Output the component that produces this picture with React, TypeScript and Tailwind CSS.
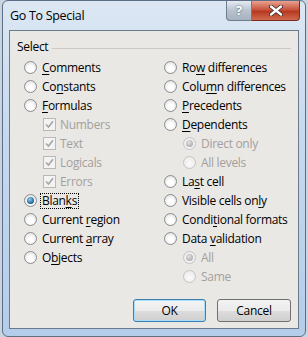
type Opt = { label: string; key?: number; sel?: boolean; off?: boolean; focus?: boolean };

function Radio({ sel, off }: { sel?: boolean; off?: boolean }) {
  return (
    <span
      className={`relative flex size-[13px] shrink-0 items-center justify-center rounded-full border ${
        off ? "border-[#c4c4c4] bg-[radial-gradient(circle_at_50%_60%,#fbfbfb,#e6e6e6)]" : "border-[#8b8d8f] bg-[radial-gradient(circle_at_50%_60%,#ffffff_30%,#d5d5d5)]"
      }`}
    >
      {sel && (
        <span
          className={`size-[7px] rounded-full ${
            off ? "bg-[radial-gradient(circle_at_40%_35%,#e2e2e2,#9c9c9c)]" : "bg-[radial-gradient(circle_at_40%_35%,#8fd0f3,#1b5e93_70%)]"
          }`}
        />
      )}
    </span>
  );
}

function Check() {
  return (
    <span className="flex size-[13px] shrink-0 items-center justify-center border border-[#b8b8b8] bg-[#f3f3f3]">
      <svg width="9" height="9" viewBox="0 0 9 9">
        <path d="M1 4.5 L3.5 7 L8 1.2" fill="none" stroke="#a6a6a6" strokeWidth="1.6" />
      </svg>
    </span>
  );
}

function Label({ o }: { o: Opt }) {
  const text =
    o.key === undefined ? (
      o.label
    ) : (
      <>
        {o.label.slice(0, o.key)}
        <span className="underline underline-offset-2">{o.label[o.key]}</span>
        {o.label.slice(o.key + 1)}
      </>
    );
  return (
    <span
      className={`whitespace-nowrap px-[1px] leading-[14px] ${o.off ? "text-[#a3a09c]" : "text-black"} ${
        o.focus ? "outline outline-1 outline-dotted outline-black" : ""
      }`}
    >
      {text}
    </span>
  );
}

function RadioRow({ o, indent }: { o: Opt; indent?: boolean }) {
  return (
    <div className={`flex h-[19px] items-center gap-[4px] ${indent ? "pl-[19px]" : ""}`}>
      <Radio sel={o.sel} off={o.off} />
      <Label o={o} />
    </div>
  );
}

function CheckRow({ label }: { label: string }) {
  return (
    <div className="flex h-[19px] items-center gap-[3px] pl-[19px]">
      <Check />
      <Label o={{ label, off: true }} />
    </div>
  );
}

export default function App() {
  return (
    <div
      className="relative h-[337px] w-[308px] overflow-hidden bg-[#c9d4e0] text-[12px]"
      style={{ fontFamily: '"Open Sans", "Noto Sans", sans-serif' }}
    >
      {/* window frame */}
      <div className="absolute inset-x-[2px] top-0 bottom-0 rounded-t-[6px] rounded-b-[6px] border border-[#5d6f86] bg-[linear-gradient(180deg,#dce7f3_0%,#c6d9ee_40%,#b3cdea_100%)]">
        <div className="flex h-[29px] items-start justify-between pl-[7px] pr-[5px]">
          <span className="pt-[6px] text-[12.5px] tracking-[-0.3px] text-black">Go To Special</span>
          <div className="flex">
            <div className="flex h-[20px] w-[26px] items-center justify-center rounded-bl-[4px] border border-t-0 border-[#6e7d8e] bg-[linear-gradient(180deg,#e6ebf1,#b9c3cf_50%,#a7b3c1)] text-[13px] font-bold text-white [text-shadow:0_0_2px_#3d4a5a]">
              ?
            </div>
            <div className="flex h-[20px] w-[48px] items-center justify-center rounded-br-[4px] border border-l-0 border-t-0 border-[#7a2a1f] bg-[linear-gradient(180deg,#e8a190,#c8553e_45%,#b63920_55%,#d06a4e)]">
              <svg width="14" height="11" viewBox="0 0 14 11">
                <path d="M2 1.5 L12 9.5 M12 1.5 L2 9.5" stroke="#3b2a26" strokeWidth="4" strokeLinecap="round" />
                <path d="M2 1.5 L12 9.5 M12 1.5 L2 9.5" stroke="#ffffff" strokeWidth="2.4" strokeLinecap="round" />
              </svg>
            </div>
          </div>
        </div>

        {/* client area */}
        <div className="mx-[6px] h-[299px] border border-[#6c7a8b] bg-[#eae8e5] px-[7px] pt-[7px]">
          <div className="flex items-center gap-[4px]">
            <span className="tracking-[-0.3px]">Select</span>
            <div className="mt-[2px] h-px flex-1 bg-[#cdcac6]" />
          </div>

          <div className="mt-[2px] grid grid-cols-[140px_1fr] pl-[7px] tracking-[-0.3px]">
            <div className="flex flex-col">
              <RadioRow o={{ label: "Comments", key: 0 }} />
              <RadioRow o={{ label: "Constants", key: 2 }} />
              <RadioRow o={{ label: "Formulas", key: 0 }} />
              <CheckRow label="Numbers" />
              <CheckRow label="Text" />
              <CheckRow label="Logicals" />
              <CheckRow label="Errors" />
              <RadioRow o={{ label: "Blanks", key: 4, sel: true, focus: true }} />
              <RadioRow o={{ label: "Current region", key: 8 }} />
              <RadioRow o={{ label: "Current array", key: 8 }} />
              <RadioRow o={{ label: "Objects", key: 1 }} />
            </div>
            <div className="flex flex-col">
              <RadioRow o={{ label: "Row differences", key: 2 }} />
              <RadioRow o={{ label: "Column differences", key: 4 }} />
              <RadioRow o={{ label: "Precedents", key: 0 }} />
              <RadioRow o={{ label: "Dependents", key: 0 }} />
              <RadioRow indent o={{ label: "Direct only", sel: true, off: true }} />
              <RadioRow indent o={{ label: "All levels", off: true }} />
              <RadioRow o={{ label: "Last cell", key: 2 }} />
              <RadioRow o={{ label: "Visible cells only", key: 16 }} />
              <RadioRow o={{ label: "Conditional formats", key: 5 }} />
              <RadioRow o={{ label: "Data validation", key: 5 }} />
              <RadioRow indent o={{ label: "All", sel: true, off: true }} />
              <RadioRow indent o={{ label: "Same", off: true }} />
            </div>
          </div>

          <div className="mt-[13px] flex justify-end gap-[11px]">
            <button className="h-[23px] w-[73px] rounded-[3px] border border-[#3c7fb1] bg-[linear-gradient(180deg,#f4f4f4_0%,#ebebeb_50%,#dddddd_51%,#cfcfcf_100%)] shadow-[inset_0_0_0_1px_#a6dcf5] tracking-[-0.3px]">
              OK
            </button>
            <button className="h-[23px] w-[74px] rounded-[3px] border border-[#707070] bg-[linear-gradient(180deg,#f2f2f2_0%,#ebebeb_50%,#dddddd_51%,#cfcfcf_100%)] tracking-[-0.3px]">
              Cancel
            </button>
          </div>
        </div>
      </div>
    </div>
  );
}
